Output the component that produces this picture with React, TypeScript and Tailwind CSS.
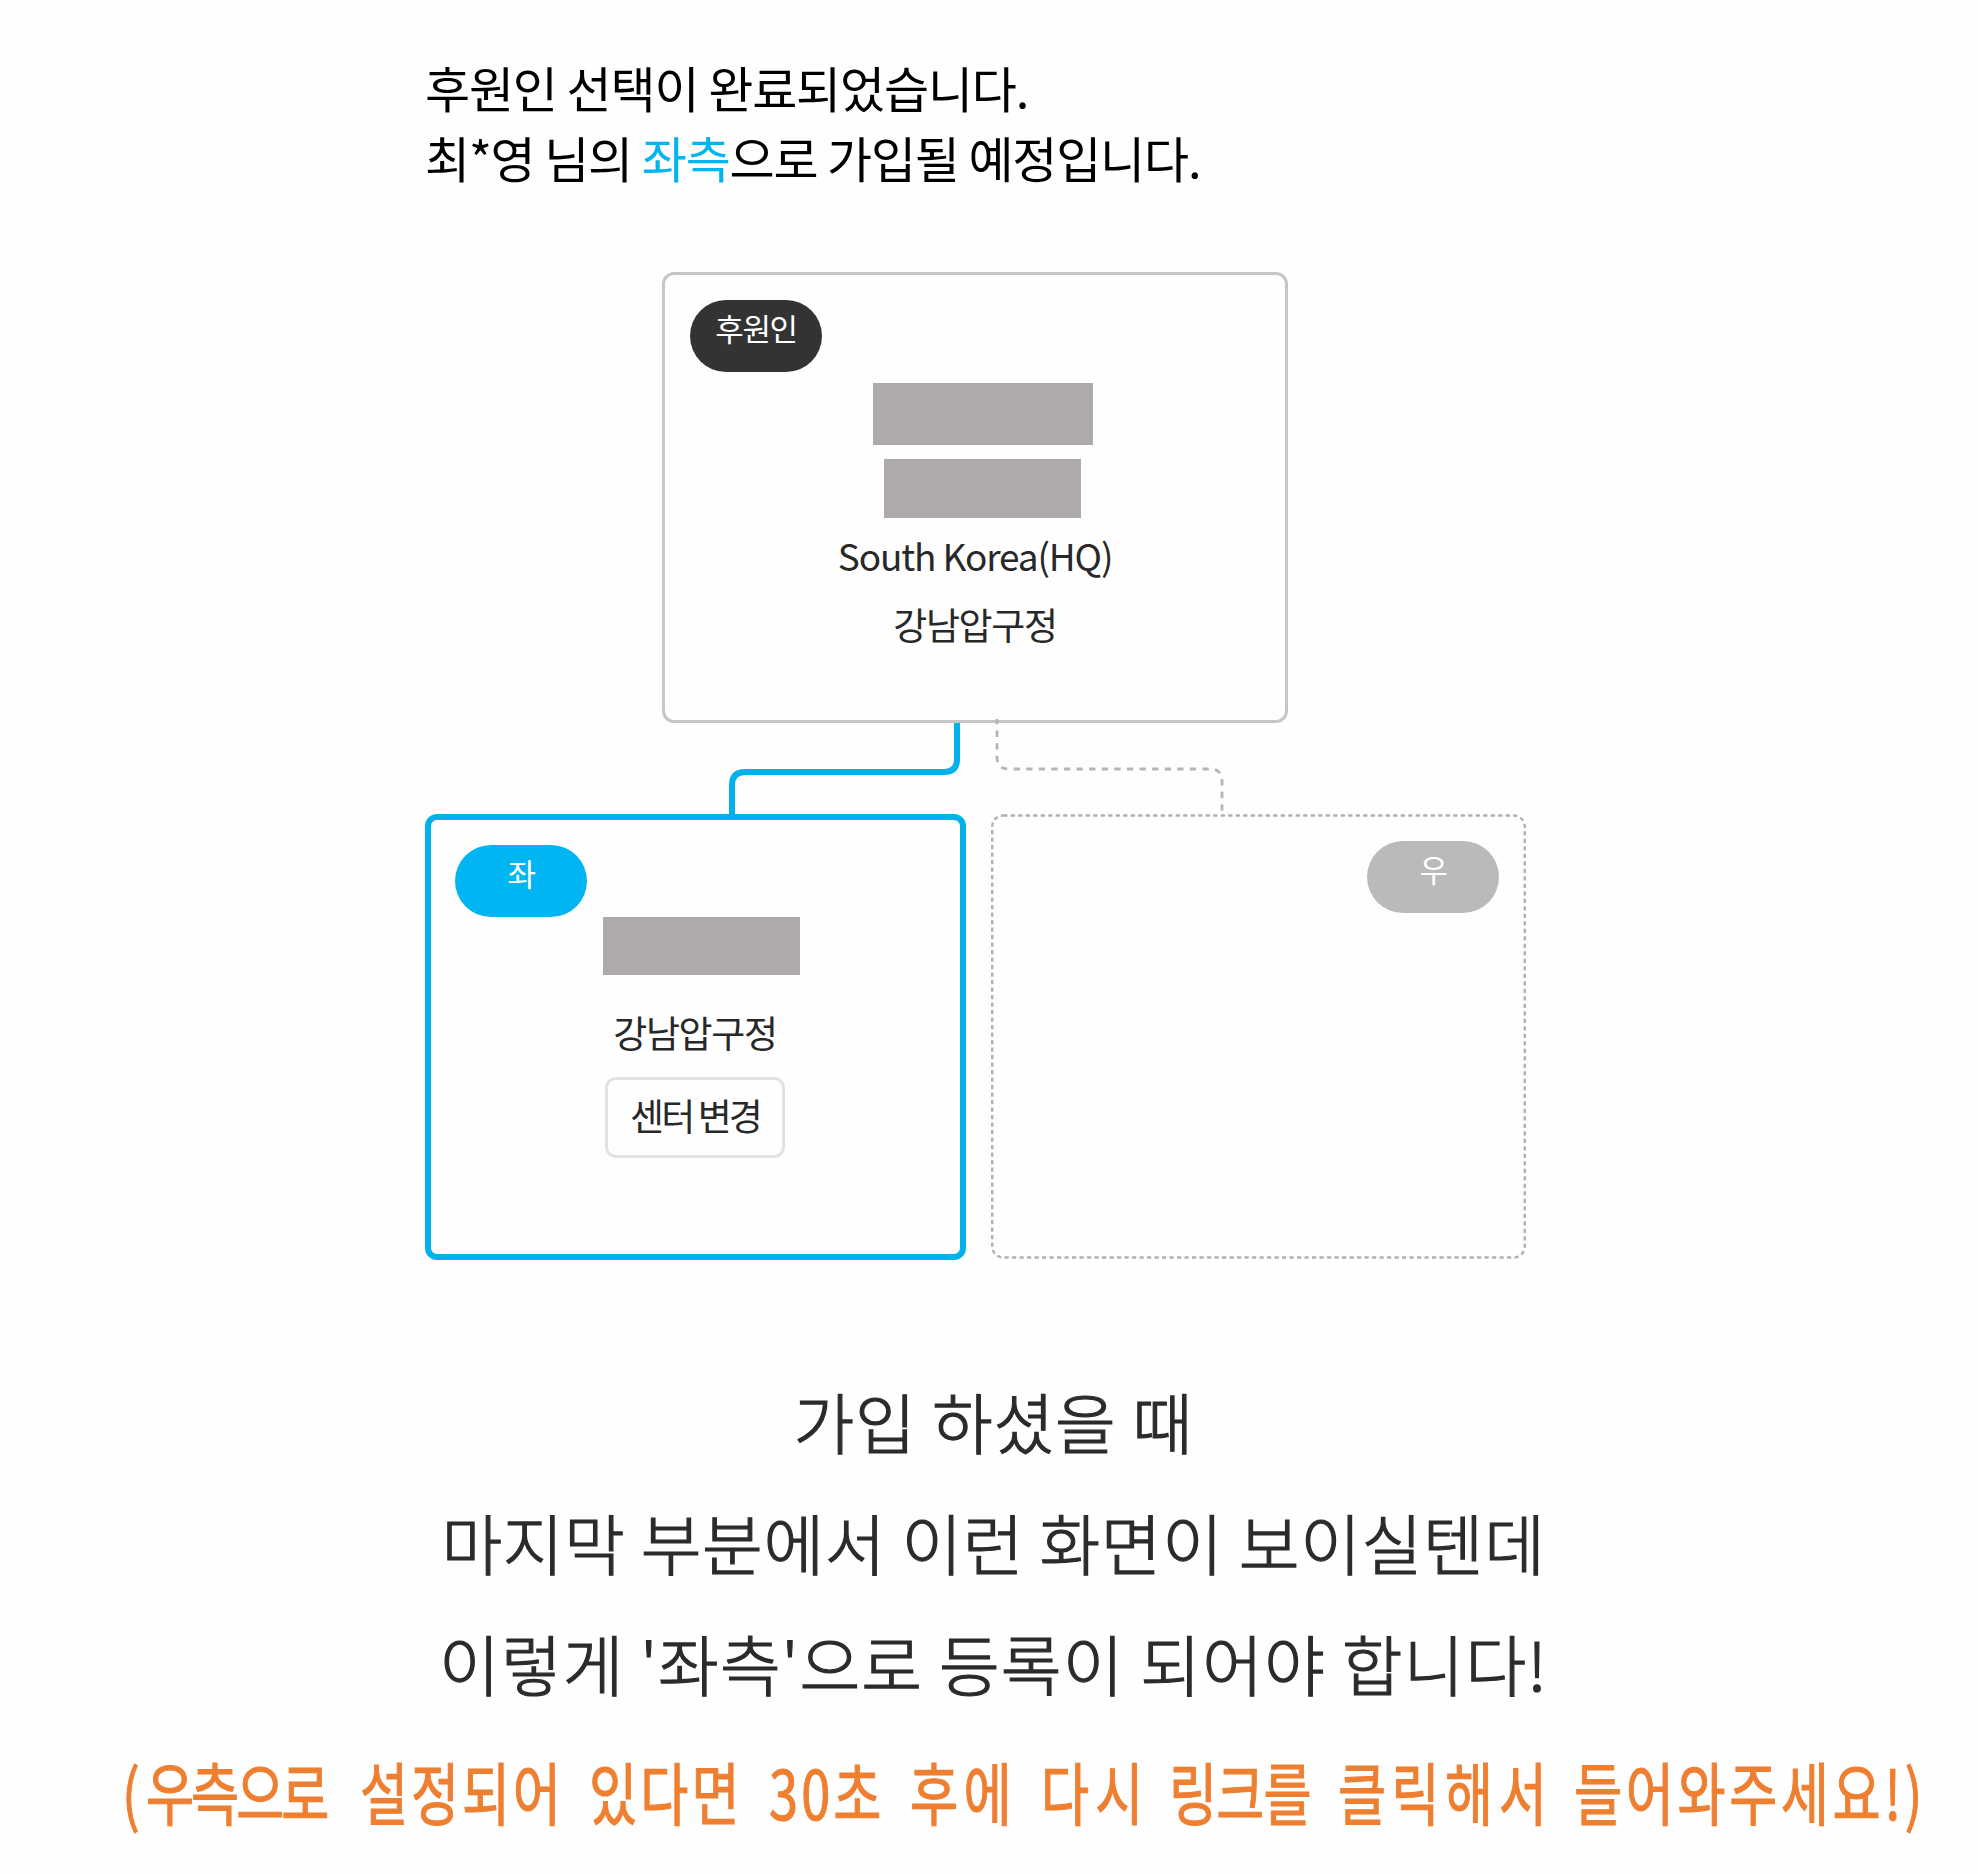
import type { ReactNode } from "react";

function Badge({ className, children }: { className: string; children: ReactNode }) {
  return (
    <div
      className={`flex h-[72px] w-[132px] justify-center rounded-full pt-[5px] text-[31px] leading-[46px] tracking-[-1.3px] text-white ${className}`}
    >
      {children}
    </div>
  );
}

function Redacted({ className }: { className: string }) {
  return <div className={`bg-[#aeaaa9] ${className}`} />;
}

const noteWords: { text: string; box: string; spacing: string }[] = [
  { text: "(", box: "w-[24px]", spacing: "tracking-normal" },
  { text: "우측으로", box: "w-[214px]", spacing: "tracking-[-4px]" },
  { text: "설정되어", box: "w-[229px]", spacing: "tracking-[3.6px]" },
  { text: "있다면", box: "w-[180px]", spacing: "tracking-[4px]" },
  { text: "30초", box: "w-[141px]", spacing: "tracking-[4px]" },
  { text: "후에", box: "w-[131px]", spacing: "tracking-[7px]" },
  { text: "다시", box: "w-[128px]", spacing: "tracking-[8px]" },
  { text: "링크를", box: "w-[169px]", spacing: "tracking-[-1.2px]" },
  { text: "클릭해서", box: "w-[236px]", spacing: "tracking-[7px]" },
  { text: "들어와주세요!)", box: "w-[350px]", spacing: "tracking-[4.6px]" },
];

export default function App() {
  return (
    <main className="flex h-[1874px] w-[1978px] flex-col overflow-hidden bg-[#fefefe] font-['Noto_Sans_CJK_KR',sans-serif] whitespace-nowrap text-[#282828]">
      <h1 className="pt-[52px] pl-[425px] text-[49px] leading-[70px] font-normal text-black">
        <span className="block tracking-[-1.15px]">후원인 선택이 완료되었습니다.</span>
        <span className="block tracking-[-1.2px]">
          최*영 님의 <span className="text-[#00b4ef]">좌측</span>으로 가입될 예정입니다.
        </span>
      </h1>

      <section className="mt-[80px] ml-[662px] flex h-[451px] w-[626px] flex-col rounded-[12px] border-[3px] border-[#c6c6c6] px-[25px] pt-[25px]">
        <Badge className="bg-[#333]">후원인</Badge>
        <Redacted className="mt-[11px] ml-[183px] h-[62px] w-[220px]" />
        <Redacted className="mt-[14px] ml-[194px] h-[59px] w-[197px]" />
        <div className="mt-[3px] text-center text-[37px] leading-[69px]">
          <p className="tracking-[-1.15px]">South Korea(HQ)</p>
          <p className="tracking-[-1.3px]">강남압구정</p>
        </div>
      </section>

      <svg className="-mt-[4px] ml-[425px] h-[95px] w-[1102px] shrink-0" viewBox="425 719 1102 95" fill="none">
        <path d="M957 723V759Q957 772 944 772H745Q732 772 732 785V814" stroke="#00b1ea" strokeWidth="6" />
        <path
          d="M997 718V757Q997 769 1009 769H1210Q1222 769 1222 781V814"
          stroke="#b5b5b5"
          strokeWidth="2.8"
          strokeDasharray="6.3 6.29"
        />
      </svg>

      <div className="ml-[425px] flex gap-[25px]">
        <section className="flex h-[446px] w-[541px] flex-col rounded-[12px] border-[6px] border-[#00b1ea] pt-[25px] pl-[24px]">
          <Badge className="bg-[#00b5f1]">좌</Badge>
          <Redacted className="ml-[148px] h-[58px] w-[197px]" />
          <div className="ml-[150px] flex w-[180px] flex-col items-center text-[37px] tracking-[-1.3px]">
            <p className="mt-[27px] leading-[60px]">강남압구정</p>
            <button className="mt-[15px] h-[81px] w-[180px] rounded-[11px] border-[3px] border-[#e2e2e2] pb-[5px] leading-none tracking-[-2.9px]">
              센터 변경
            </button>
          </div>
        </section>

        <section className="relative flex h-[445px] w-[535px] justify-end pt-[27px] pr-[27px]">
          <svg className="absolute inset-0 h-full w-full" viewBox="0 0 535 445" fill="none">
            <rect x="1.2" y="1.5" width="532.6" height="442" rx="11" stroke="#b0b0b0" strokeWidth="2.4" strokeDasharray="4.2 3.3" />
          </svg>
          <Badge className="bg-[#bababa]">우</Badge>
        </section>
      </div>

      <section className="mt-[100px] ml-[9px] flex flex-col items-center text-[66px] leading-[121px] font-light text-[#2b2b2b] [-webkit-text-stroke:1.2px_#2b2b2b]">
        <p className="tracking-[0.8px]">가입 하셨을 때</p>
        <p className="tracking-[0.65px]">마지막 부분에서 이런 화면이 보이실텐데</p>
        <p className="tracking-[1.15px]">이렇게 '좌측'으로 등록이 되어야 합니다!</p>
      </section>

      <p className="mt-[18px] ml-[122px] flex text-[68px] leading-[100px] font-normal text-[#ee7f31] [-webkit-text-stroke:1.1px_#ee7f31]">
        {noteWords.map((word) => (
          <span key={word.text} className={`shrink-0 ${word.box}`}>
            <span className={`inline-block origin-left scale-x-[0.77] ${word.spacing}`}>{word.text}</span>
          </span>
        ))}
      </p>
    </main>
  );
}
